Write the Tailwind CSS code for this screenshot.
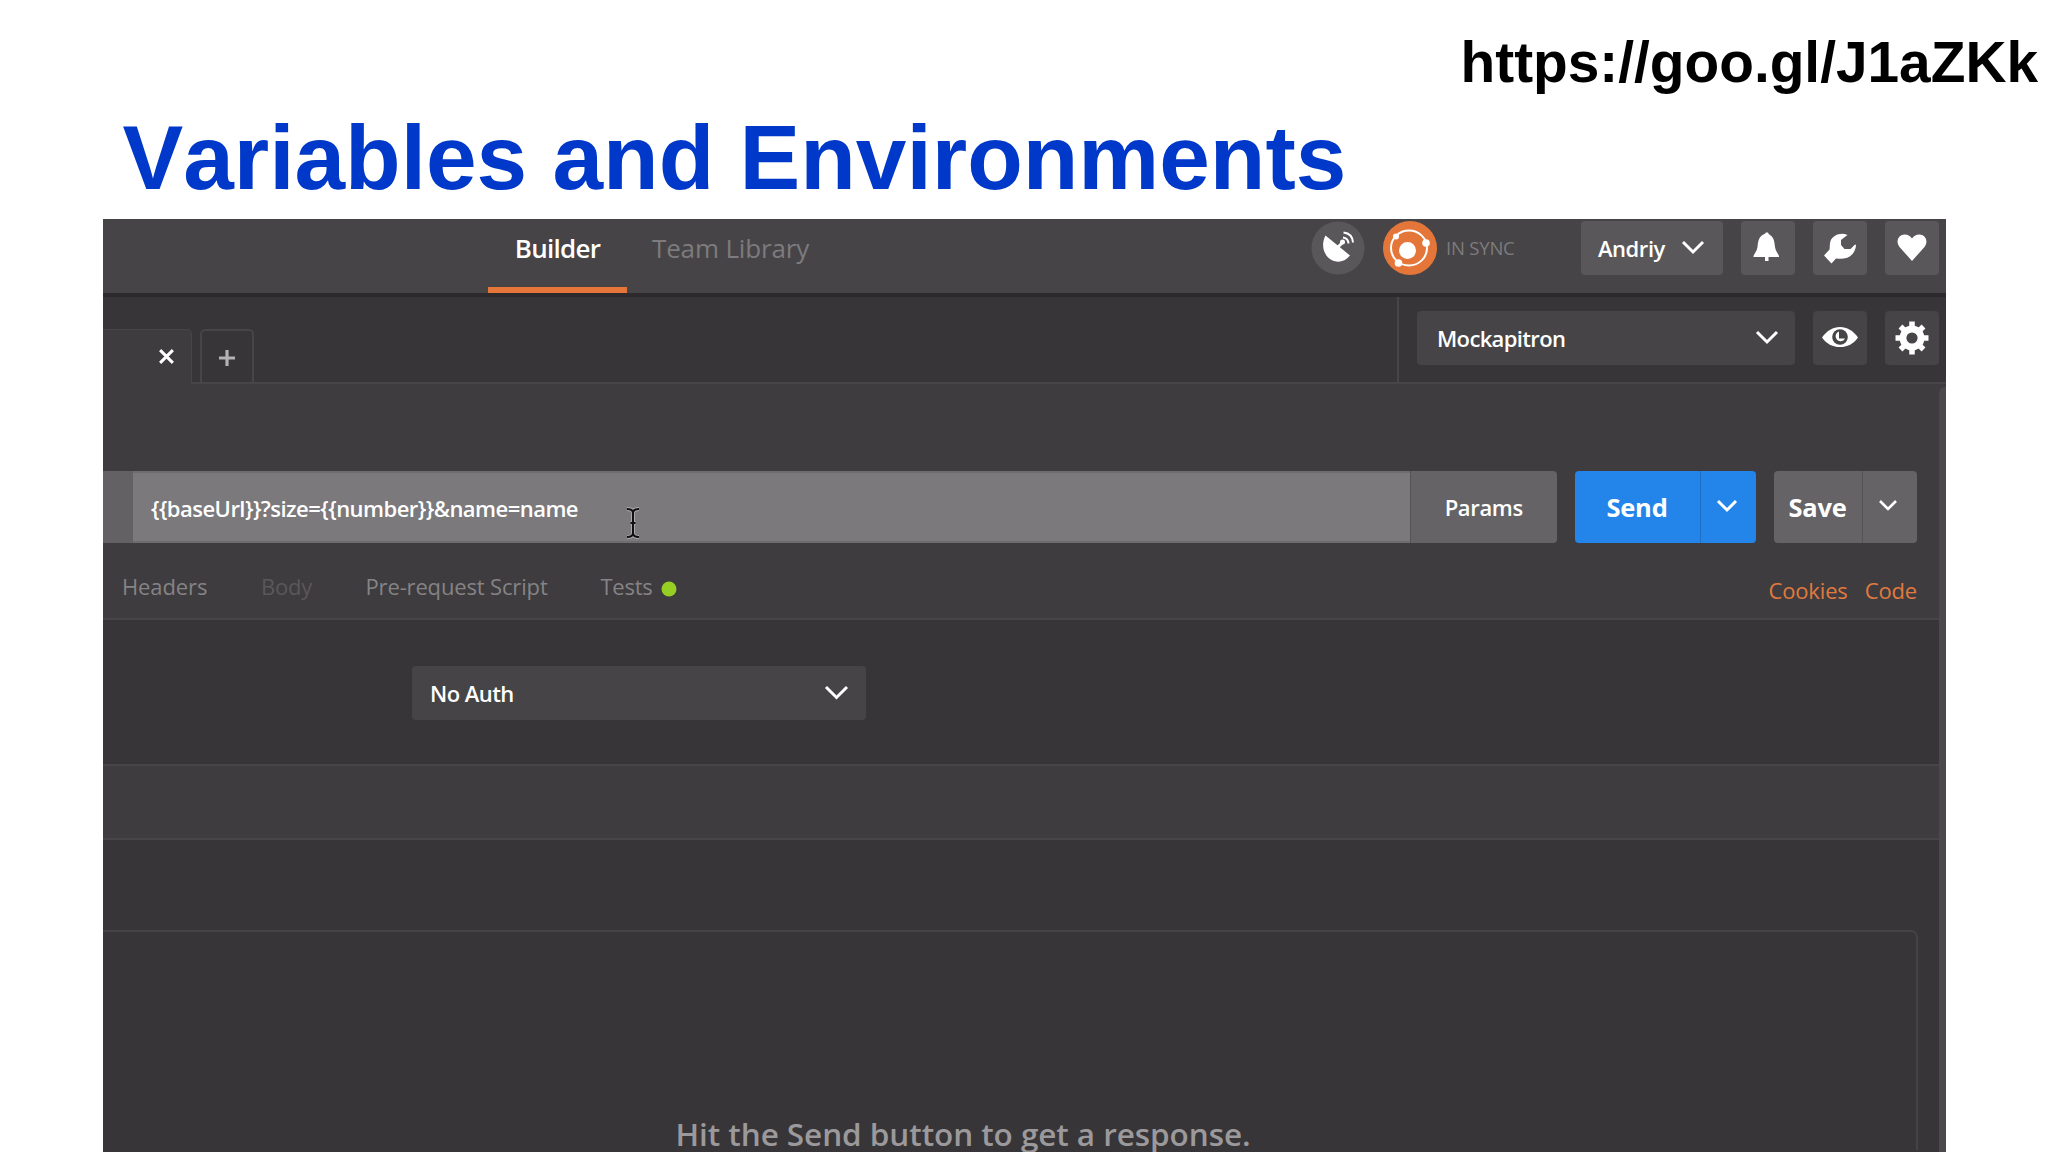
<!DOCTYPE html>
<html lang="en">
<head>
<meta charset="utf-8">
<title>Variables and Environments</title>
<script src="https://cdn.jsdelivr.net/npm/@tailwindcss/browser@4"></script>
</head>
<body class="w-[2048px] h-[1152px] overflow-hidden bg-white font-['Open_Sans',sans-serif] text-white">
<header class="h-[219px] pt-[31px] font-['Liberation_Sans',sans-serif] font-bold whitespace-nowrap [font-kerning:none]">
  <p class="h-[64px] leading-[64px] pr-[10px] text-right text-[56.8px] text-black">https://goo.gl/J1aZKk</p>
  <h1 class="h-[127px] leading-[126px] pl-[122.5px] text-[91px] text-[#0039c9]">Variables and Environments</h1>
</header>

<main class="relative ml-[102.5px] w-[1843.5px] h-[933px] flex flex-col bg-[#373537] whitespace-nowrap">
  <!-- top bar -->
  <div class="h-[74px] shrink-0 flex items-start justify-between bg-[#464446] pr-[7px]">
    <nav class="flex pl-[385.5px] leading-[59px]">
      <a class="w-[139px] h-[74px] border-b-[6px] border-[#e5763a] text-center text-[26px] font-semibold tracking-[-0.75px]">Builder</a>
      <a class="pl-[25px] text-[26px] tracking-[-0.15px] text-[#7d7b7d]">Team Library</a>
    </nav>
    <div class="flex items-center pt-[2px]">
      <svg class="size-[54px]" viewBox="0 0 54 54"><circle cx="27" cy="27" r="26.5" fill="#595759"/><path d="M14.500 14.500C10 23 12 33 19 38c6 4 14 4 20-3.500z" fill="#fff"/><path d="M26 27l7-7" stroke="#fff" stroke-width="3"/><circle cx="31.500" cy="21" r="2.500" fill="#fff"/><path d="M32 16.500q5 .5 5.500 6M32.500 11.500q9 1 9.500 10" fill="none" stroke="#fff" stroke-width="2"/></svg>
      <svg class="ml-[18px] size-[54px]" viewBox="0 0 54 54"><circle cx="27" cy="27" r="27" fill="#e5763a"/><ellipse cx="26" cy="27" rx="18" ry="17.500" fill="none" stroke="#fff" stroke-width="2"/><circle cx="24.500" cy="29.500" r="8.500" fill="#fff"/><circle cx="13" cy="15.500" r="3" fill="#fff"/><circle cx="43" cy="22" r="3.800" fill="#fff"/><circle cx="15.500" cy="42" r="3.800" fill="#fff"/></svg>
      <span class="ml-[9px] w-[70px] text-[18.5px] tracking-[-0.2px] leading-[54px] text-[#7d7b7d]">IN SYNC</span>
      <button class="ml-[65px] w-[142px] h-[54px] flex items-center justify-between rounded-[4px] bg-[#595759] pl-[17px] pr-[18px] text-[22px] font-semibold tracking-[-0.45px]">Andriy<svg class="w-[24px] h-[16px]" viewBox="0 0 24 16"><path d="M2 2l10 10L22 2" fill="none" stroke="#fff" stroke-width="3"/></svg></button>
      <button class="ml-[18px] size-[54px] rounded-[4px] bg-[#595759]"><svg viewBox="0 0 54 54"><path d="M25 11.500h2q.5 1.500 2 2.500c4 2.500 4.500 7 5 12 .5 4 3 6 4 9v1H27.500v4h-3.500v-4H12.500v-1c1-3 3.500-5 4-9 .5-5 1-9.500 5-12q3-1.500 3.500-2.500z" fill="#fff"/></svg></button>
      <button class="ml-[18px] size-[54px] rounded-[4px] bg-[#595759]"><svg viewBox="0 0 54 54"><path d="M34.500 14C28 11 20 14 17.500 20c-1 3-.5 6-1 8.500L11 34.500l7.500 8L23 37.500c7 1 13 0 17-5 2-3 3-6 3-8.500l-1-.5-4.500 4.500-6 0-3.500-4 0-5z" fill="#fff"/></svg></button>
      <button class="ml-[18px] size-[54px] rounded-[4px] bg-[#595759]"><svg viewBox="0 0 54 54"><path d="M27 40L14.500 26C10 20 14 13.500 19.500 13.500c4 0 6 2 7.500 4 1.500-2 3.500-4 7.500-4C40 13.500 44 20 39.500 26z" fill="#fff"/></svg></button>
    </div>
  </div>
  <!-- request tabs and environment picker -->
  <div class="h-[91px] shrink-0 flex justify-between border-t-[4px] border-[#2c2a2c] shadow-[inset_0_-2px_0_#474547]">
    <div class="flex pt-[32px]">
      <div class="w-[89.500px] h-[55px] rounded-tr-[5px] border-t border-r border-[#474547] bg-[#3e3c3e] flex items-center justify-end pr-[16px]"><svg class="size-[17px] -mt-[1px]" viewBox="0 0 16 16"><path d="M2 2l12 12M14 2L2 14" stroke="#fff" stroke-width="2.800"/></svg></div>
      <div class="ml-[8px] w-[54px] h-[54px] rounded-t-[5px] border-x-2 border-t-2 border-[#474547] flex items-center justify-center"><svg class="size-[16px] mr-px mt-px" viewBox="0 0 16 16"><path d="M8 0v16M0 8h16" stroke="#b4b2b4" stroke-width="3.200"/></svg></div>
    </div>
    <div class="flex items-start border-l-2 border-[#474547] pl-[18px] pr-[7px] pt-[14px]">
      <button class="w-[378px] h-[54px] flex items-center justify-between rounded-[4px] bg-[#464446] pl-[20px] pr-[16px] text-[22px] font-semibold tracking-[-0.65px]">Mockapitron<svg class="w-[24px] h-[16px]" viewBox="0 0 24 16"><path d="M2 2l10 10L22 2" fill="none" stroke="#fff" stroke-width="3"/></svg></button>
      <button class="ml-[18px] size-[54px] rounded-[4px] bg-[#464446]"><svg viewBox="0 0 54 54"><path d="M9 26.500C14 19.500 20 16 27 16s13 3.500 18 10.500c-5 7-11 9.500-18 9.500S14 33.500 9 26.500z" fill="#fff"/><circle cx="27" cy="26" r="7.800" fill="#464446"/><path d="M26 20.500v7h6a5 5 0 1 1-6-7z" fill="#fff"/></svg></button>
      <button class="ml-[18px] size-[54px] rounded-[4px] bg-[#464446]"><svg viewBox="0 0 54 54"><g fill="none" stroke="#fff"><circle cx="27" cy="27" r="9" stroke-width="7"/><path d="M27 10.500v33M10.500 27h33M15.500 15.500l23 23M38.500 15.500l-23 23" stroke-width="5.500"/></g><circle cx="27" cy="27" r="5.600" fill="#464446"/></svg></button>
    </div>
  </div>
  <!-- request line -->
  <div class="h-[236px] shrink-0 bg-[#3e3c3e] pt-[87px] border-b-2 border-[#474547]">
    <div class="h-[72px] flex items-stretch pr-[29px] font-semibold">
      <div class="w-[30.500px] bg-[#636163]"></div>
      <div class="w-[1277px] border-y-2 border-[#6e6c6e] bg-[#7b797b] pl-[18px] text-[22px] tracking-[-0.53px] leading-[70px]">{{baseUrl}}?size={{number}}&amp;name=name</div>
      <button class="w-[146.500px] rounded-r-[4px] border-l border-[#555355] bg-[#656365] text-[22px] tracking-[-0.35px] pt-px">Params</button>
      <div class="ml-[18px] w-[181px] flex rounded-[4px] bg-[#2385ea]">
        <button class="w-[126px] border-r border-[#1d6fc6] pt-px text-[25.500px] font-bold tracking-[-0.2px]">Send</button>
        <button class="flex-1 flex items-center justify-center pr-[3px]"><svg class="w-[22px] h-[15px] -mt-[2px]" viewBox="0 0 22 15"><path d="M2 2l9 9 9-9" fill="none" stroke="#fff" stroke-width="3"/></svg></button>
      </div>
      <div class="ml-[18px] flex-1 flex rounded-[4px] bg-[#656365]">
        <button class="w-[89px] border-r border-[#555355] pt-px text-[25.500px] font-bold tracking-[-0.3px]">Save</button>
        <button class="flex-1 flex items-center justify-center pr-[4px]"><svg class="w-[20px] h-[14px] -mt-[3px]" viewBox="0 0 20 14"><path d="M2 2l8 8 8-8" fill="none" stroke="#fff" stroke-width="2.600"/></svg></button>
      </div>
    </div>
    <div class="h-[76px] flex justify-between pl-[19.500px] pr-[29px] text-[22px] text-[#858385]">
      <div class="flex leading-[87px]">
        <span class="w-[139px] tracking-[-0.1px]">Headers</span>
        <span class="w-[104.500px] tracking-[-0.2px] text-[#5a585a]">Body</span>
        <span class="w-[235px] tracking-[-0.15px]">Pre-request Script</span>
        <span class="tracking-[-0.25px]">Tests</span>
        <svg class="ml-[8.500px] mt-[37.500px] size-[16px]" viewBox="0 0 16 16"><circle cx="8" cy="8" r="7.500" fill="#96cf24"/></svg>
      </div>
      <div class="flex gap-[17px] leading-[95px] tracking-[-0.15px] text-[#e07a3e]"><span>Cookies</span><span>Code</span></div>
    </div>
  </div>
  <!-- authorization -->
  <div class="h-[144px] shrink-0 pt-[46px] pl-[309.500px]">
    <button class="w-[454px] h-[54px] flex items-center justify-between rounded-[4px] bg-[#464446] pl-[18px] pr-[17px] text-[22px] font-semibold tracking-[-0.55px]">No Auth<svg class="w-[25px] h-[17px]" viewBox="0 0 25 17"><path d="M2 2l10.500 10.500L23 2" fill="none" stroke="#fff" stroke-width="3"/></svg></button>
  </div>
  <div class="h-[76px] shrink-0 bg-[#3e3c3e] border-y-2 border-[#474547]"></div>
  <!-- response -->
  <div class="flex-1 pt-[90px] pr-[28px]">
    <div class="h-[220px] border-t-2 border-r-2 border-[#454345] rounded-tr-[7px] pt-[177px] pl-[573px] text-[31.500px] leading-[50px] tracking-[-0.07px] text-[#9b999b] font-semibold">Hit the Send button to get a response.</div>
  </div>
  <!-- scroll bar -->
  <div class="absolute right-0 top-[168px] bottom-0 w-[7px] rounded-tl-[6px] bg-[#4b494c]"></div>
  <!-- text pointer -->
  <svg class="absolute left-[522px] top-[288px] w-[16px] h-[32px]" viewBox="0 0 16 32"><path d="M2 2q6 0 6 4 0-4 6-4M8 5v22M2 30q6 0 6-4 0 4 6 4M5.500 16h5" fill="none" stroke="#aaa" stroke-width="4"/><path d="M2 2q6 0 6 4 0-4 6-4M8 5v22M2 30q6 0 6-4 0 4 6 4M5.500 16h5" fill="none" stroke="#111" stroke-width="2"/></svg>
</main>
</body>
</html>
